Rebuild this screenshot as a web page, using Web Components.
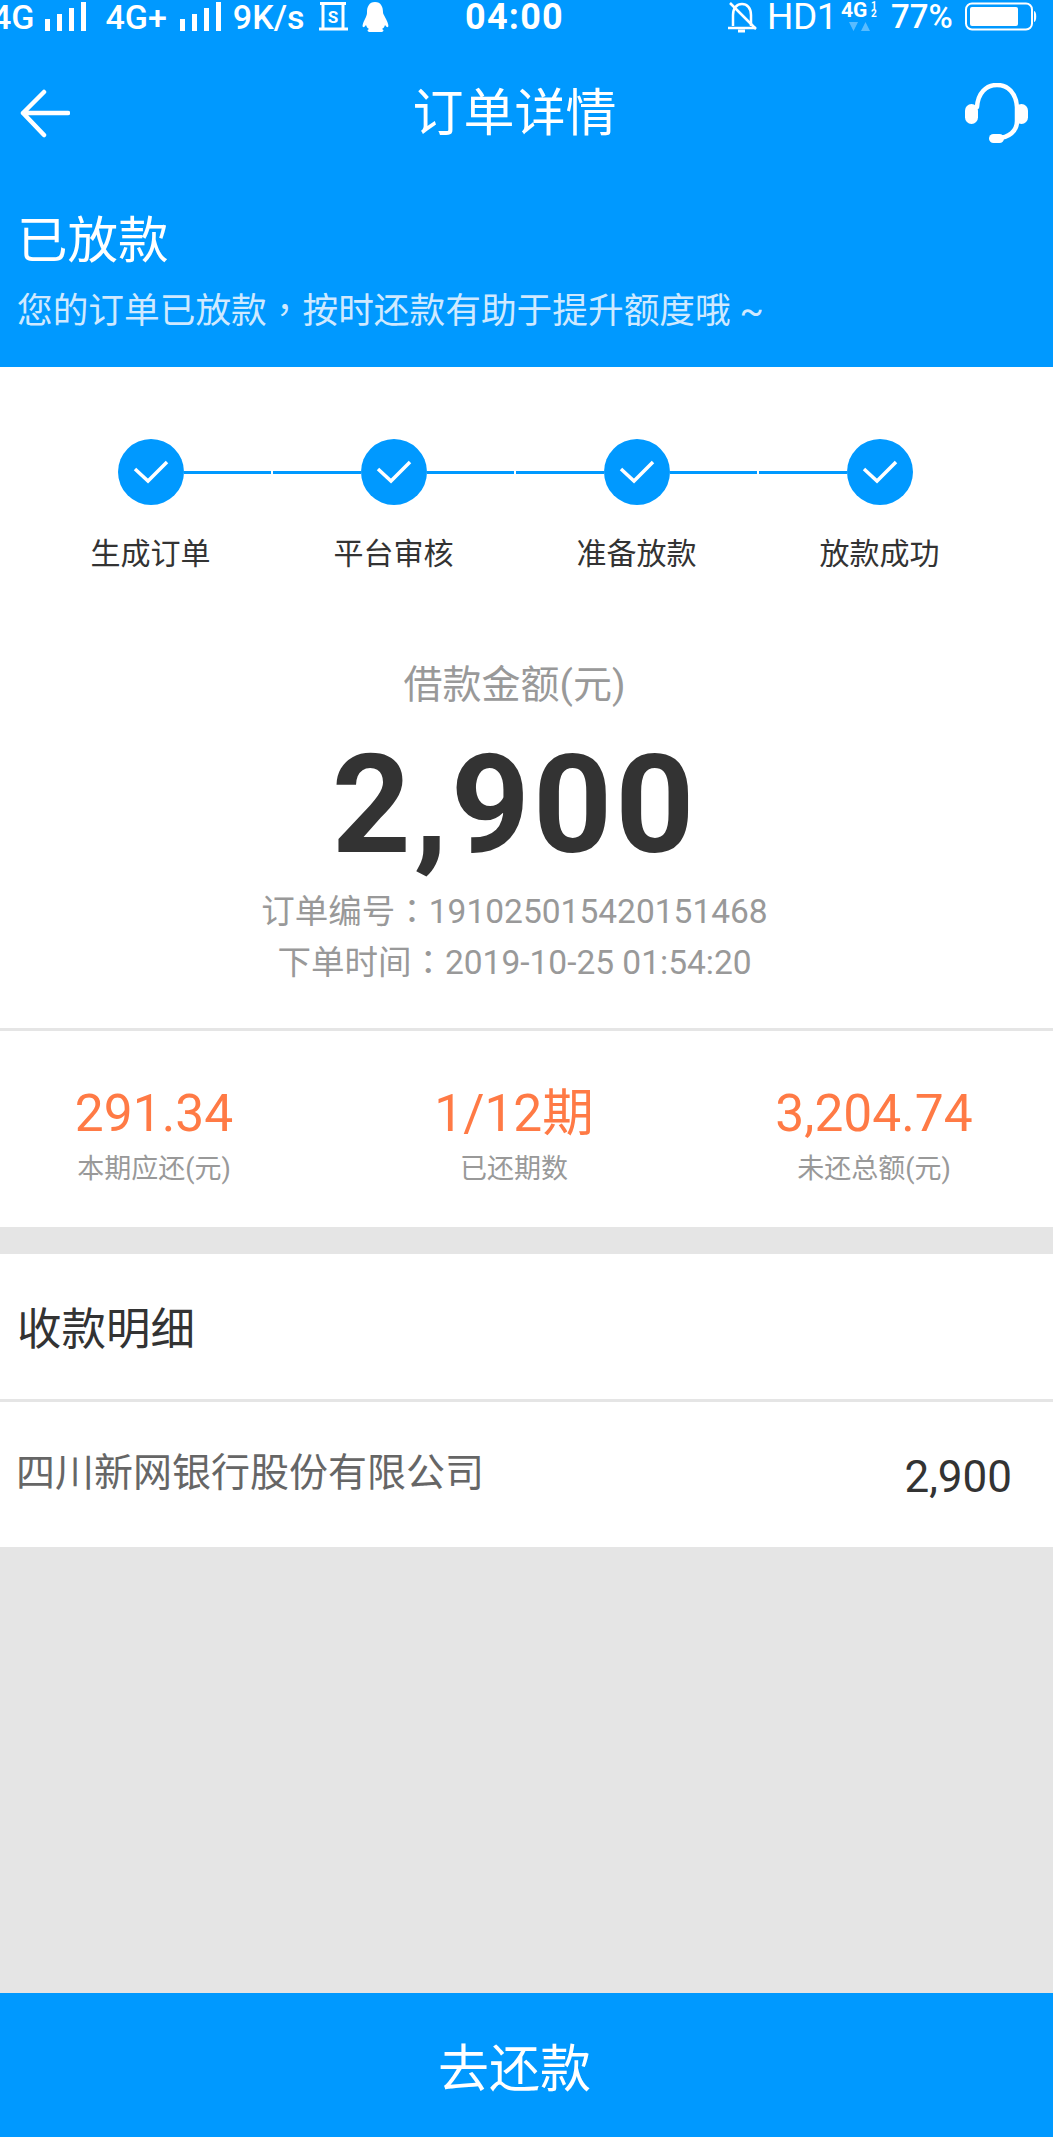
<!DOCTYPE html>
<html lang="zh">
<head>
<meta charset="utf-8">
<title>订单详情</title>
<style>
  html, body { margin: 0; padding: 0; }
  body { width: 1053px; height: 2137px; overflow: hidden; font-family: Roboto, "Noto Sans CJK SC", sans-serif; }
  /* the reference has its full-width punctuation centred in the cell */
  .punct { font-family: "Noto Sans CJK TC", sans-serif; }
</style>
</head>
<body>
<order-page>
  <status-bar slot="top"></status-bar>
  <nav-bar slot="top">订单详情</nav-bar>
  <order-banner slot="top" heading="已放款">您的订单已放款<span class="punct" lang="zh-Hant">，</span>按时还款有助于提升额度哦 ~</order-banner>

  <order-steps>
    <order-step first>生成订单</order-step>
    <order-step>平台审核</order-step>
    <order-step>准备放款</order-step>
    <order-step last>放款成功</order-step>
  </order-steps>

  <loan-amount label="借款金额(元)" amount="2,900">
    <div>订单编号<span class="punct" lang="zh-Hant">：</span>191025015420151468</div>
    <div>下单时间<span class="punct" lang="zh-Hant">：</span>2019-10-25 01:54:20</div>
  </loan-amount>

  <loan-stats>
    <loan-stat value="291.34">本期应还(元)</loan-stat>
    <loan-stat value="1/12期">已还期数</loan-stat>
    <loan-stat value="3,204.74">未还总额(元)</loan-stat>
  </loan-stats>

  <detail-card heading="收款明细">
    <span>四川新网银行股份有限公司</span>
    <span slot="value">2,900</span>
  </detail-card>

  <pay-button slot="bottom">去还款</pay-button>
</order-page>

<script>
const FONT = 'Roboto, "Noto Sans CJK SC", sans-serif';

// page shell: blue header on top, grey filler in the middle, button at the bottom
class OrderPage extends HTMLElement {
    constructor() {
        super();
        this.attachShadow({mode: 'open'});
        this.shadowRoot.innerHTML = `
        <style>
            :host { display: flex; flex-direction: column; width: 1053px; height: 2137px; background: #e5e5e5; font-family: ${FONT}; }
            header { background: #0099ff; height: 367px; flex: none; }
            main { flex: 1; }
            footer { flex: none; }
        </style>
        <header><slot name="top"></slot></header>
        <main><slot></slot></main>
        <footer><slot name="bottom"></slot></footer>
        `;
    }
}

class StatusBar extends HTMLElement {
    constructor() {
        super();
        this.attachShadow({mode: 'open'});
        const bars = `<svg width="41" height="30" viewBox="0 0 41 30" fill="#fff"><rect x="0" y="17" width="5" height="12"/><rect x="12" y="12" width="5" height="17"/><rect x="24" y="6" width="5" height="23"/><rect x="36" y="0" width="5" height="29"/></svg>`;
        this.shadowRoot.innerHTML = `
        <style>
            :host { display: flex; height: 44px; color: #fff; font: 500 34px/30px Roboto, sans-serif; overflow: hidden; position: relative; }
            .left, .right { display: flex; align-items: flex-start; height: 30px; white-space: nowrap; }
            .left { position: absolute; left: -8px; top: 2px; }
            .right { position: absolute; left: 727px; top: 2px; }
            .time { position: absolute; left: 0; right: 24px; top: 2px; text-align: center; font-weight: 700; font-size: 36px; letter-spacing: 1.200px; }
            svg { display: block; flex: none; }
            .hd { font-weight: 400; font-size: 37px; letter-spacing: -.5px; }
            .net { position: relative; width: 38px; height: 30px; font-size: 21px; line-height: 16px; font-weight: 700; }
            .frac { position: absolute; left: 28px; top: 0; width: 10px; font-size: 10px; line-height: 8px; text-align: center; }
        </style>
        <div class="left">
            <span>4G</span>
            <span style="width:11px"></span>${bars}
            <span style="margin-left:19px">4G+</span>
            <span style="width:13px"></span>${bars}
            <span style="margin-left:12px">9K/s</span>
            <svg style="margin-left:14px" width="30" height="30" viewBox="0 0 30 30" fill="none" stroke="#fff" stroke-width="3"><path d="M2 1.500h26M5 1.500v25M25 1.500v25M1 27h29"/><text x="15" y="21" font-family="Roboto" font-size="17" font-weight="700" fill="#fff" stroke="none" text-anchor="middle">S</text></svg>
            <svg style="margin-left:13px" width="28" height="30" viewBox="0 0 28 30" fill="#fff"><path d="M14 0c6 0 8 5 8 10 0 2 1 3 3 7 2 4 3 7 2 8-1 .5-2-.5-3-2-.5 2-1.500 3-3 4 2 1 2 2 0 3H8c-2-1-2-2 0-3-1.500-1-2.500-2-3-4-1 1.500-2 2.500-3 2-1-1 0-4 2-8 2-4 2-5 2-7 0-5 2-10 8-10z"/></svg>
        </div>
        <div class="time">04:00</div>
        <div class="right">
            <svg width="31" height="32" viewBox="0 0 31 32" fill="none" stroke="#fff" stroke-width="2.500"><path d="M6 24V13C6 6 10 2 15 2s9 4 9 11v11M1 26h28"/><path d="M3 1l26 26"/><path d="M11 29h7" stroke-width="3"/></svg>
            <span class="hd" style="margin-left:9px">HD1</span>
            <span class="net" style="margin-left:4px">4G<span class="frac">1<br>2</span><svg style="position:absolute;left:8px;top:20px" width="21" height="9" viewBox="0 0 21 9" fill="#fff" opacity=".35"><path d="M0 0h9L4.500 9zM12 9h9L16.500 0z"/></svg></span>
            <span style="margin-left:12px;font-size:33px">77%</span>
            <svg style="margin-left:12px" width="73" height="30" viewBox="0 0 73 30" fill="none"><rect x="1" y="1.500" width="66" height="26" rx="6" stroke="#fff" stroke-width="2"/><rect x="5" y="5" width="48" height="19" rx="2" fill="#fff"/><path d="M69 9c3 0 3 11 0 11z" fill="#fff"/></svg>
        </div>
        `;
    }
}

class NavBar extends HTMLElement {
    constructor() {
        super();
        this.attachShadow({mode: 'open'});
        this.shadowRoot.innerHTML = `
        <style>
            :host { display: flex; align-items: center; justify-content: space-between; height: 140px; padding: 0 24px 0 20px; color: #fff; font-size: 51px; }
            .title { flex: 1; text-align: center; margin: 0 6px 10px 0; }
            svg { display: block; flex: none; }
        </style>
        <svg width="50" height="50" viewBox="0 0 50 50" fill="none" stroke="#fff" stroke-width="4.500" stroke-linecap="round" stroke-linejoin="round"><path d="M48 24H3M24 3L3 24l21 22"/></svg>
        <div class="title"><slot></slot></div>
        <svg width="64" height="62" viewBox="0 0 64 62" fill="none" stroke="#fff" stroke-width="4.500" stroke-linecap="round"><path d="M12 24C13 10 21 2 32 2s19 8 20 22v14c0 10-8 17-20 17"/><rect x="0" y="21" width="13" height="20" rx="6.500" fill="#fff" stroke="none"/><rect x="50" y="21" width="13" height="20" rx="6.500" fill="#fff" stroke="none"/><rect x="24" y="51" width="15" height="9" rx="4.500" fill="#fff" stroke="none"/></svg>
        `;
    }
}

class OrderBanner extends HTMLElement {
    constructor() {
        super();
        this.attachShadow({mode: 'open'});
        this.shadowRoot.innerHTML = `
        <style>
            :host { display: block; padding: 0 17px; color: #fff; }
            h1 { margin: 0; font-size: 50.500px; font-weight: 400; line-height: 60px; padding-top: 27px; }
            p { margin: 0; font-size: 35.700px; line-height: 52px; padding-top: 11px; color: #cfe9ff; white-space: nowrap; }
        </style>
        <h1></h1>
        <p><slot></slot></p>
        `;
    }
    connectedCallback() {
        this.shadowRoot.querySelector('h1').textContent = this.getAttribute('heading');
    }
}

class OrderSteps extends HTMLElement {
    constructor() {
        super();
        this.attachShadow({mode: 'open'});
        this.shadowRoot.innerHTML = `
        <style>
            :host { display: grid; grid-template-columns: repeat(4, 243px); padding: 72px 0 0 29px; background: #fff; }
        </style>
        <slot></slot>
        `;
    }
}

class OrderStep extends HTMLElement {
    constructor() {
        super();
        this.attachShadow({mode: 'open'});
        this.shadowRoot.innerHTML = `
        <style>
            :host { display: flex; flex-direction: column; align-items: center; color: #333; font-size: 30px; }
            .track { display: flex; align-items: center; width: 100%; height: 66px; }
            .line { flex: 1; height: 3px; background: #0099ff; margin: 0 1px; }
            :host([first]) .left, :host([last]) .right { visibility: hidden; }
            .dot { flex: none; width: 66px; height: 66px; border-radius: 50%; background: #0099ff; display: flex; align-items: center; justify-content: center; margin: 0 -1px; }
            .label { margin-top: 29px; line-height: 40px; }
        </style>
        <div class="track">
            <span class="line left"></span>
            <span class="dot"><svg width="36" height="26" viewBox="0 0 36 26" fill="none" stroke="#fff" stroke-width="3.500"><path d="M2 10l13 12L34 3"/></svg></span>
            <span class="line right"></span>
        </div>
        <div class="label"><slot></slot></div>
        `;
    }
}

class LoanAmount extends HTMLElement {
    constructor() {
        super();
        this.attachShadow({mode: 'open'});
        this.shadowRoot.innerHTML = `
        <style>
            :host { display: block; background: #fff; text-align: center; padding: 86px 24px 0 0; height: 457px; box-sizing: border-box; border-bottom: 3px solid #e5e5e5; }
            .label { color: #999; font-size: 39px; line-height: 50px; }
            .amount { color: #333; font-size: 138px; font-weight: 700; line-height: 170px; font-family: Roboto, sans-serif; letter-spacing: 3px; margin: 10px 0 -5px; }
            .meta { color: #999; font-size: 33.500px; line-height: 48px; }
        </style>
        <div class="label"></div>
        <div class="amount"></div>
        <div class="meta"><slot></slot></div>
        `;
    }
    connectedCallback() {
        this.shadowRoot.querySelector('.label').textContent = this.getAttribute('label');
        this.shadowRoot.querySelector('.amount').textContent = this.getAttribute('amount');
    }
}

class LoanStats extends HTMLElement {
    constructor() {
        super();
        this.attachShadow({mode: 'open'});
        this.shadowRoot.innerHTML = `
        <style>
            :host { display: grid; grid-template-columns: 308px 412px 308px; height: 196px; box-sizing: border-box; padding-top: 53px; background: #fff; margin-bottom: 27px; }
        </style>
        <slot></slot>
        `;
    }
}

class LoanStat extends HTMLElement {
    constructor() {
        super();
        this.attachShadow({mode: 'open'});
        this.shadowRoot.innerHTML = `
        <style>
            :host { display: block; text-align: center; }
            .value { color: #ff7a45; font-size: 51.500px; line-height: 60px; }
            .label { color: #999; font-size: 27px; line-height: 36px; margin-top: 7px; }
        </style>
        <div class="value"></div>
        <div class="label"><slot></slot></div>
        `;
    }
    connectedCallback() {
        this.shadowRoot.querySelector('.value').textContent = this.getAttribute('value');
    }
}

class DetailCard extends HTMLElement {
    constructor() {
        super();
        this.attachShadow({mode: 'open'});
        this.shadowRoot.innerHTML = `
        <style>
            :host { display: block; background: #fff; }
            h2 { margin: 0; height: 148px; box-sizing: border-box; border-bottom: 3px solid #e5e5e5; padding: 7px 0 0 17px; font-size: 44.500px; font-weight: 400; line-height: 138px; color: #333; }
            .row { display: flex; justify-content: space-between; align-items: center; height: 145px; padding: 0 41px 0 16px; color: #666; font-size: 39px; }
            .name { padding-bottom: 12px; }
            .value { color: #333; font-size: 44px; padding-top: 5px; }
        </style>
        <h2></h2>
        <div class="row">
            <span class="name"><slot></slot></span>
            <span class="value"><slot name="value"></slot></span>
        </div>
        `;
    }
    connectedCallback() {
        this.shadowRoot.querySelector('h2').textContent = this.getAttribute('heading');
    }
}

class PayButton extends HTMLElement {
    constructor() {
        super();
        this.attachShadow({mode: 'open'});
        this.shadowRoot.innerHTML = `
        <style>
            :host { display: flex; align-items: center; justify-content: center; height: 144px; padding-right: 24px; background: #0099ff; color: #fff; font-size: 51px; }
        </style>
        <slot></slot>
        `;
    }
}

customElements.define('order-page', OrderPage);
customElements.define('status-bar', StatusBar);
customElements.define('nav-bar', NavBar);
customElements.define('order-banner', OrderBanner);
customElements.define('order-steps', OrderSteps);
customElements.define('order-step', OrderStep);
customElements.define('loan-amount', LoanAmount);
customElements.define('loan-stats', LoanStats);
customElements.define('loan-stat', LoanStat);
customElements.define('detail-card', DetailCard);
customElements.define('pay-button', PayButton);
</script>
</body>
</html>
